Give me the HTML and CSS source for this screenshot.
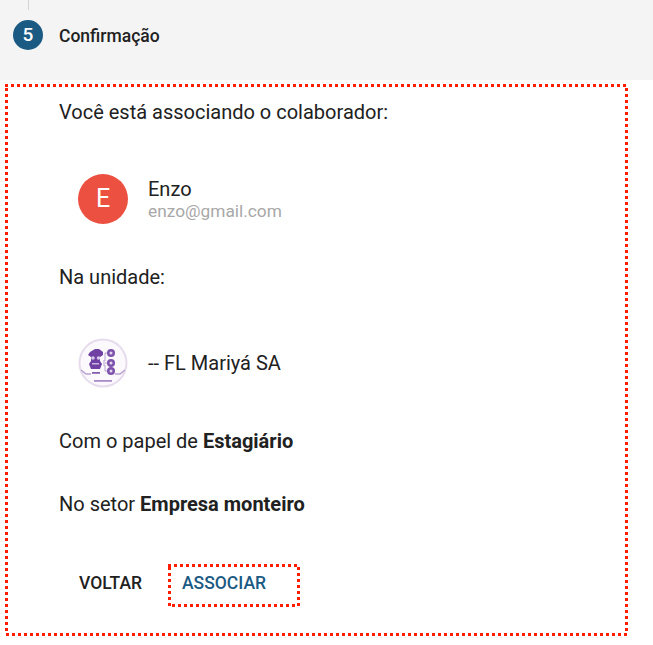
FILE: index.html
```html
<!DOCTYPE html>
<html lang="pt-BR">
<head>
<meta charset="utf-8">
<title>Confirmação</title>
<link rel="stylesheet" href="styles.css">
</head>
<body>
<header class="step-head">
  <div class="connector"></div>
  <div class="step-row">
    <span class="step-num">5</span>
    <span class="step-title">Confirmação</span>
  </div>
</header>
<main class="panel">
  <p class="line">Você está associando o colaborador:</p>
  <div class="entity person">
    <span class="avatar">E</span>
    <div class="who">
      <div class="name">Enzo</div>
      <div class="email">enzo@gmail.com</div>
    </div>
  </div>
  <p class="line">Na unidade:</p>
  <div class="entity unit">
    <svg class="logo" viewBox="0 0 50 50" aria-hidden="true">
      <defs><filter id="soft" x="-10%" y="-10%" width="120%" height="120%"><feGaussianBlur stdDeviation="0.65"/></filter></defs>
      <g filter="url(#soft)">
        <circle cx="25" cy="25" r="24.500" fill="#e6dcee"/>
        <circle cx="25" cy="25" r="22.500" fill="#fbf9fc"/>
        <path d="M12 14l5-3h4l4 3v3l-3 2v4l2 3-2 5h-9l-2-5 2-3v-4l-3-2z" fill="#6f3fa3"/>
        <circle cx="15" cy="20" r="1.800" fill="#d9cae8"/>
        <circle cx="20.500" cy="20" r="1.800" fill="#d9cae8"/>
        <rect x="14" y="25" width="7" height="1.500" fill="#c8b4de"/>
        <circle cx="33" cy="15" r="4" fill="#7d52ab"/>
        <circle cx="33" cy="25" r="4" fill="#7d52ab"/>
        <circle cx="33" cy="33" r="4" fill="#7d52ab"/>
        <circle cx="33" cy="15" r="1.500" fill="#e2d7ec"/>
        <circle cx="33" cy="25" r="1.500" fill="#e2d7ec"/>
        <circle cx="33" cy="33" r="1.500" fill="#e2d7ec"/>
        <path d="M25 23h2v-8h2M25 25h4M25 27h2v6h2" fill="none" stroke="#a78cc6" stroke-width="0.800"/>
        <rect x="14" y="34" width="8" height="1.800" fill="#8560b0"/>
        <path d="M3 32l5 4 5 0M47 32l-5 4-5 0" fill="none" stroke="#b9a2d2" stroke-width="1.500"/>
        <rect x="16" y="42" width="18" height="1.800" fill="#a98bc9"/>
      </g>
    </svg>
    <span class="unit-name">-- FL Mariyá SA</span>
  </div>
  <p class="line">Com o papel de <strong>Estagiário</strong></p>
  <p class="line sector">No setor <strong>Empresa monteiro</strong></p>
  <div class="actions">
    <button class="btn back" type="button">VOLTAR</button>
    <button class="btn confirm" type="button">ASSOCIAR</button>
  </div>
</main>
</body>
</html>
```

FILE: styles.css
```css
* { box-sizing: border-box; }

:root {
  --dots-x: repeating-linear-gradient(90deg, #ff1c00 0 3px, transparent 3px 6px);
  --dots-y: repeating-linear-gradient(180deg, #ff1c00 0 3px, transparent 3px 6px);
}

html, body {
  margin: 0;
  padding: 0;
  background: #fff;
}

body {
  font-family: Roboto, "Liberation Sans", sans-serif;
  color: #212121;
  font-size: 20px;
}

.step-head {
  height: 80px;
  background: #f4f4f4;
}

.connector {
  width: 1px;
  height: 10px;
  margin-left: 28px;
  background: #d4d4d4;
}

.step-row {
  display: flex;
  align-items: center;
  gap: 16px;
  margin-top: 10px;
  padding-left: 13px;
}

.step-num {
  width: 30px;
  height: 30px;
  border-radius: 50%;
  background: #1a5a83;
  color: #fff;
  font-size: 19px;
  font-weight: 500;
  line-height: 30px;
  text-align: center;
}

.step-title {
  padding-top: 2px;
  font-size: 17.500px;
  font-weight: 500;
  color: #212121;
}

.panel {
  width: 623px;
  height: 552px;
  margin: 4px 0 0 5px;
  padding: 16px 0 0 54px;
  background-image: var(--dots-x), var(--dots-x), var(--dots-y), var(--dots-y);
  background-repeat: no-repeat;
  background-size: 100% 3px, 622px 3px, 3px 546px, 3px 546px;
  background-position: 0 0, 1px 100%, 0 4px, 100% 4px;
}

.line {
  margin: 0;
  height: 24px;
  line-height: 24px;
}

.entity {
  display: flex;
  align-items: center;
  margin-left: 19px;
  gap: 20px;
}

.person {
  margin-top: 50px;
  margin-bottom: 41px;
}

.avatar {
  width: 50px;
  height: 50px;
  border-radius: 50%;
  background: #ec5040;
  color: #fff;
  font-size: 25px;
  line-height: 50px;
  text-align: center;
}

.who {
  padding-top: 2px;
  line-height: 22px;
}

.name {
  font-size: 20px;
}

.email {
  font-size: 17.300px;
  color: #a8a8a8;
}

.unit {
  margin-top: 49px;
  margin-bottom: 41px;
}

.logo {
  width: 50px;
  height: 50px;
}

.sector {
  margin-top: 39px;
}

strong {
  font-weight: 700;
}

.actions {
  display: flex;
  align-items: center;
  margin-top: 48px;
  margin-left: 2px;
}

.btn {
  height: 43px;
  background: none;
  border: 0;
  font-family: inherit;
  font-size: 17.500px;
  font-weight: 500;
  padding: 0 0 5px;
  text-align: left;
}

.back {
  width: 107px;
  padding-left: 18px;
  color: #212121;
}

.confirm {
  width: 132px;
  padding-left: 14px;
  color: #1a5a83;
  background-image: var(--dots-x), var(--dots-x), var(--dots-y), var(--dots-y);
  background-repeat: no-repeat;
  background-size: 130px 3px, 123px 3px, 3px 39px, 3px 39px;
  background-position: 0 0, 4px 100%, 0 3px, 100% 3px;
}
```
